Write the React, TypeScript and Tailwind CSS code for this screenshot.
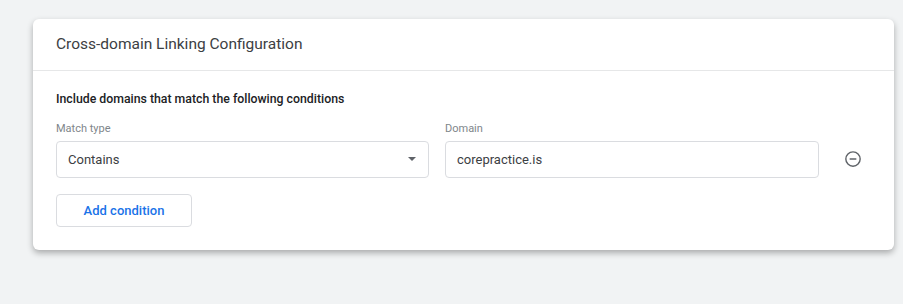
import { useState } from "react";

function MinusCircle() {
  return (
    <svg width="20" height="20" viewBox="0 0 24 24" fill="none">
      <circle cx="12" cy="12" r="8.6" stroke="#5f6368" strokeWidth="1.7" />
      <line x1="8" y1="12" x2="16" y2="12" stroke="#5f6368" strokeWidth="1.8" />
    </svg>
  );
}

export default function App() {
  const [domain] = useState("corepractice.is");

  return (
    <div className="min-h-[304px] w-full bg-[#f1f3f4] pt-[19px] pl-[33px] pr-[9px] font-['Roboto',sans-serif]">
      <div className="w-[861px] rounded-[6px] bg-white shadow-[0_3px_6px_rgba(0,0,0,0.3)]">
        <div className="flex h-[52px] items-center border-b border-[#e6e7e8] px-[23px]">
          <span className="text-[15.5px] text-[#3c4043]">Cross-domain Linking Configuration</span>
        </div>
        <div className="px-[23px] pt-[19px] pb-[23px]">
          <div className="text-[12.3px] font-medium text-[#202124]">
            Include domains that match the following conditions
          </div>
          <div className="mt-[13px] flex items-end gap-4">
            <div className="w-[373px]">
              <div className="mb-[3px] text-[11px] text-[#80868b]">Match type</div>
              <div className="flex h-[37px] items-center justify-between rounded-[4px] border border-[#dadce0] pl-[11px] pr-[12px]">
                <span className="text-[13px] text-[#3c4043]">Contains</span>
                <span className="h-0 w-0 border-x-[4px] border-t-[4px] border-x-transparent border-t-[#5f6368]" />
              </div>
            </div>
            <div className="w-[374px]">
              <div className="mb-[3px] text-[11px] text-[#80868b]">Domain</div>
              <div className="flex h-[37px] items-center rounded-[4px] border border-[#dadce0] pl-[11px]">
                <span className="text-[13px] text-[#3c4043]">{domain}</span>
              </div>
            </div>
            <div className="flex h-[37px] items-center pl-[8px]">
              <MinusCircle />
            </div>
          </div>
          <button className="mt-[16px] flex h-[33px] w-[136px] items-center justify-center rounded-[4px] border border-[#dadce0] bg-white text-[13px] font-medium text-[#1a73e8]">
            Add condition
          </button>
        </div>
      </div>
    </div>
  );
}
